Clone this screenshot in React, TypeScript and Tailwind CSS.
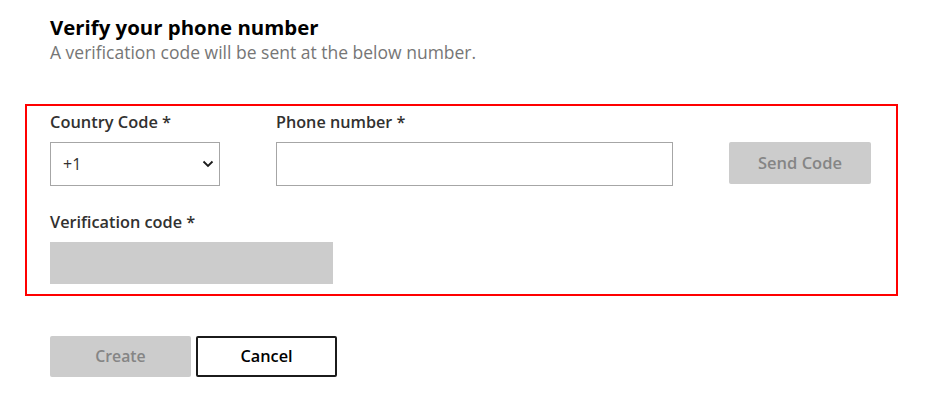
export default function App() {
  return (
    <div className="w-[936px] h-[404px] bg-white text-[#323130]" style={{ fontFamily: '"Open Sans", "Noto Sans", sans-serif' }}>
      <div className="pl-[50px] pt-[13px]">
        <h1 className="text-[20.4px] leading-[28px] font-bold text-black">Verify your phone number</h1>
        <p className="text-[17.5px] leading-[22px] text-[#767676]">A verification code will be sent at the below number.</p>
      </div>

      <div className="ml-[25px] mt-[41px] w-[873px] h-[192px] border-2 border-[#ff0000] pl-[23px] pt-[6px]">
        <div className="flex items-end">
          <div className="w-[226px]">
            <label className="block text-[16.4px] leading-[20px] font-semibold mb-[10px]">Country Code *</label>
            <div className="w-[170px] h-[44px] border border-[#a6a6a6] flex items-center justify-between pl-[12px] pr-[5px] text-[16px]">
              <span>+1</span>
              <svg width="12" height="8" viewBox="0 0 12 8" fill="none" stroke="#1b1b1b" strokeWidth="1.8">
                <path d="M1.5 1.5 6 6l4.5-4.5" />
              </svg>
            </div>
          </div>
          <div className="w-[453px]">
            <label className="block text-[16.2px] leading-[20px] font-semibold mb-[10px]">Phone number *</label>
            <input className="w-[397px] h-[44px] border border-[#a6a6a6] outline-none px-2" />
          </div>
          <button className="w-[142px] h-[42px] mb-[2px] rounded-[2px] bg-[#cccccc] text-[#858585] text-[16.5px] font-semibold">Send Code</button>
        </div>

        <label className="block mt-[26px] text-[16.3px] leading-[20px] font-semibold mb-[10px]">Verification code *</label>
        <div className="w-[283px] h-[42px] bg-[#cccccc]" />
      </div>

      <div className="flex gap-[5px] pl-[50px] mt-[40px]">
        <button className="w-[141px] h-[41px] rounded-[2px] bg-[#cccccc] text-[#858585] text-[15.8px] font-semibold">Create</button>
        <button className="w-[141px] h-[41px] rounded-[2px] border-2 border-[#1b1b1b] text-black text-[16.3px] font-semibold">Cancel</button>
      </div>
    </div>
  )
}
